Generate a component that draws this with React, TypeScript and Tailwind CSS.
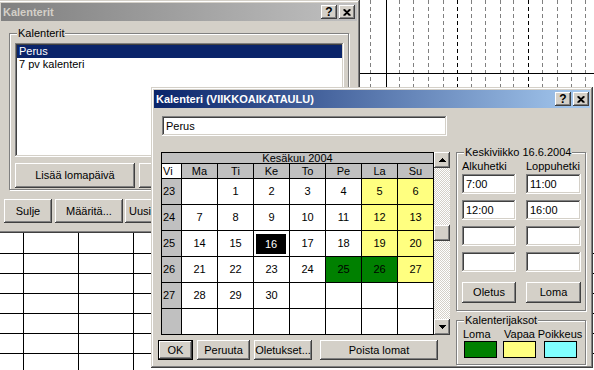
import type { ReactNode } from 'react'

const raised =
  'shadow-[inset_-1px_-1px_#404040,inset_1px_1px_#ffffff,inset_-2px_-2px_#808080,inset_2px_2px_#d4d0c8]'
const frame =
  'shadow-[inset_-1px_-1px_#404040,inset_1px_1px_#d4d0c8,inset_-2px_-2px_#808080,inset_2px_2px_#ffffff]'
const sunken =
  'shadow-[inset_-1px_-1px_#ffffff,inset_1px_1px_#808080,inset_-2px_-2px_#d4d0c8,inset_2px_2px_#404040]'
const checker =
  'bg-[image:repeating-conic-gradient(#d4d0c8_0_25%,#ffffff_0_50%)] bg-[length:2px_2px]'

const dayNames = ['Ma', 'Ti', 'Ke', 'To', 'Pe', 'La', 'Su']

const weeks: { no: number | null; days: (number | null)[] }[] = [
  { no: 23, days: [null, 1, 2, 3, 4, 5, 6] },
  { no: 24, days: [7, 8, 9, 10, 11, 12, 13] },
  { no: 25, days: [14, 15, 16, 17, 18, 19, 20] },
  { no: 26, days: [21, 22, 23, 24, 25, 26, 27] },
  { no: 27, days: [28, 29, 30, null, null, null, null] },
  { no: null, days: [null, null, null, null, null, null, null] },
]

const holidays = [25, 26]
const selectedDay = 16

function Button({
  children,
  className = '',
  isDefault = false,
}: {
  children?: ReactNode
  className?: string
  isDefault?: boolean
}) {
  if (isDefault) {
    return (
      <div className={`border border-black bg-[#d4d0c8] ${className}`}>
        <div className={`h-full flex items-center justify-center ${raised}`}>{children}</div>
      </div>
    )
  }
  return (
    <div className={`flex items-center justify-center bg-[#d4d0c8] ${raised} ${className}`}>
      {children}
    </div>
  )
}

function TitleButtons() {
  return (
    <div className="flex gap-[2px]">
      <div
        className={`w-[16px] h-[14px] flex items-center justify-center bg-[#d4d0c8] font-bold text-[12px] text-black leading-none ${raised}`}
      >
        ?
      </div>
      <div className={`w-[16px] h-[14px] flex items-center justify-center bg-[#d4d0c8] ${raised}`}>
        <svg width="9" height="7" viewBox="0 0 9 7">
          <path
            d="M0.5 0.5L6.5 6.5M1.5 0.5L7.5 6.5M7.5 0.5L1.5 6.5M6.5 0.5L0.5 6.5"
            stroke="black"
            strokeWidth="1.2"
          />
        </svg>
      </div>
    </div>
  )
}

function GroupBox({
  label,
  className = '',
  children,
}: {
  label: string
  className?: string
  children: ReactNode
}) {
  return (
    <div className={`relative border border-[#808080] shadow-[inset_1px_1px_#ffffff,1px_1px_#ffffff] ${className}`}>
      <span className="absolute left-[7px] top-[-7px] px-[1px] bg-[#d4d0c8] leading-[13px]">{label}</span>
      {children}
    </div>
  )
}

function Arrow({ down = false }: { down?: boolean }) {
  return (
    <div className={`h-[16px] flex items-center justify-center bg-[#d4d0c8] ${raised}`}>
      <svg width="7" height="4" viewBox="0 0 7 4" shapeRendering="crispEdges">
        <path d={down ? 'M0 0h7L3.5 4z' : 'M3.5 0L7 4H0z'} fill="black" />
      </svg>
    </div>
  )
}

function BackgroundChart() {
  const gray = [370, 399, 413, 428, 443, 471, 485, 500, 513, 542, 557, 571, 585]
  const dark = [457, 528]
  return (
    <svg className="absolute inset-0" width="594" height="370">
      {gray.map(x => (
        <line key={x} x1={x + 0.5} y1={0} x2={x + 0.5} y2={90} stroke="#808080" strokeDasharray="4 3" />
      ))}
      {dark.map(x => (
        <line key={x} x1={x + 0.5} y1={0} x2={x + 0.5} y2={90} stroke="#000" strokeDasharray="4 3" />
      ))}
      <line x1={386.5} y1={0} x2={386.5} y2={90} stroke="#000" />
      <line x1={360} y1={73.5} x2={594} y2={73.5} stroke="#000" />
      {[253, 273, 293, 313, 333, 353].map(y => (
        <line key={y} x1={0} y1={y + 0.5} x2={594} y2={y + 0.5} stroke="#000" />
      ))}
      {[23, 78, 133].map(x => (
        <line key={x} x1={x + 0.5} y1={230} x2={x + 0.5} y2={370} stroke="#000" />
      ))}
    </svg>
  )
}

function CalendarsWindow() {
  return (
    <div className={`absolute left-[-2px] top-0 w-[362px] h-[233px] p-[3px] bg-[#d4d0c8] ${frame}`}>
      <div className="h-[18px] flex items-center justify-between pl-[2px] pr-[2px] bg-[linear-gradient(to_right,#808080,#c0c0c0)]">
        <span className="font-bold text-[#d4d0c8]">Kalenterit</span>
        <TitleButtons />
      </div>
      <GroupBox label="Kalenterit" className="mt-[12px] mx-[8px] pt-[9px] pl-[5px] pr-[4px] pb-[1px]">
        <div className={`h-[114px] p-[2px] bg-white ${sunken}`}>
          <div className="h-[13px] pl-[2px] bg-[#0a246a] text-white">Perus</div>
          <div className="h-[13px] pl-[2px]">7 pv kalenteri</div>
        </div>
        <div className="mt-[6px] flex gap-[4px]">
          <Button className="w-[120px] h-[25px]">Lisää lomapäivä</Button>
          {/* covered by the dialog */}
          <Button className="w-[120px] h-[25px]" />
        </div>
      </GroupBox>
      <div className="mt-[9px] ml-[3px] flex">
        <Button className="w-[48px] h-[24px]">Sulje</Button>
        <Button className="ml-[3px] w-[68px] h-[24px]">Määritä...</Button>
        <Button className="ml-[2px] w-[30px] h-[24px]">Uusi</Button>
      </div>
    </div>
  )
}

function dayCellColor(day: number | null, col: number) {
  if (day && holidays.includes(day)) return 'bg-[#008000]'
  if (day && col >= 5) return 'bg-[#ffff80]'
  return 'bg-white'
}

function MonthGrid() {
  return (
    <div className="grid grid-cols-[19px_repeat(7,35px)] grid-rows-[10px_14px_repeat(6,25px)] gap-px bg-black border border-black">
      <div className="col-span-8 flex items-center justify-center bg-[#c0c0c0] leading-[10px]">Kesäkuu 2004</div>
      <div className="flex items-center pl-[1px] bg-white">Vi</div>
      {dayNames.map(n => (
        <div key={n} className="flex items-center justify-center bg-[#c0c0c0]">
          {n}
        </div>
      ))}
      {weeks.map((w, wi) => (
        <div key={wi} className="contents">
          <div className="flex items-center pl-[1px] bg-[#c0c0c0]">{w.no}</div>
          {w.days.map((d, di) =>
            d === selectedDay ? (
              <div key={di} className="flex bg-white">
                <div className="flex-1 ml-[2px] mr-[3px] mt-[3px] mb-[2px] flex items-center justify-center bg-black text-white">
                  {d}
                </div>
              </div>
            ) : (
              <div key={di} className={`flex items-center justify-center ${dayCellColor(d, di)}`}>
                {d}
              </div>
            ),
          )}
        </div>
      ))}
    </div>
  )
}

function CalendarDialog() {
  return (
    <div className={`absolute left-[151px] top-[87px] w-[442px] h-[281px] p-[3px] bg-[#d4d0c8] ${frame}`}>
      <div className="h-[18px] flex items-center justify-between pl-[2px] pr-[1px] bg-[linear-gradient(to_right,#0a246a,#a6caf0)]">
        <span className="font-bold text-white">Kalenteri (VIIKKOAIKATAULU)</span>
        <TitleButtons />
      </div>
      <div className="flex">
        <div className="w-[296px] pl-[4px]">
          <div className={`mt-[8px] ml-[4px] w-[285px] h-[20px] flex items-center pl-[4px] bg-white ${sunken}`}>
            Perus
          </div>
          <div className="mt-[16px] ml-[3px] flex">
            <MonthGrid />
            <div className="w-[16px] flex flex-col">
              <Arrow />
              <div className={`h-[57px] ${checker}`} />
              <div className={`h-[16px] bg-[#d4d0c8] ${raised}`} />
              <div className={`flex-1 ${checker}`} />
              <Arrow down />
            </div>
          </div>
          <div className="mt-[5px] flex">
            <Button isDefault className="w-[35px] h-[20px]">
              OK
            </Button>
            <Button className="ml-[4px] w-[53px] h-[20px]">Peruuta</Button>
            <Button className="ml-[4px] w-[58px] h-[20px]">Oletukset...</Button>
            <Button className="ml-[8px] w-[118px] h-[20px]">Poista lomat</Button>
          </div>
        </div>
        <div className="ml-[6px] w-[130px]">
          <GroupBox label="Keskiviikko 16.6.2004" className="mt-[44px] h-[159px] pt-[7px] pl-[5px]">
            <div className="grid grid-cols-[54px_55px] gap-x-[10px]">
              <div className="h-[13px]">Alkuhetki</div>
              <div className="h-[13px]">Loppuhetki</div>
            </div>
            <div className="mt-[1px] grid grid-cols-[54px_55px] gap-x-[10px] gap-y-[6px]">
              {['7:00', '11:00', '12:00', '16:00', '', '', '', ''].map((t, i) => (
                <div key={i} className={`h-[20px] flex items-center pl-[4px] bg-white ${sunken}`}>
                  {t}
                </div>
              ))}
              <Button className="mt-[4px] h-[21px]">Oletus</Button>
              <Button className="mt-[4px] h-[21px]">Loma</Button>
            </div>
          </GroupBox>
          <GroupBox label="Kalenterijaksot" className="mt-[9px] h-[45px] pt-[7px] pl-[6px]">
            <div className="flex">
              <div className="w-[35px] flex flex-col">
                <span className="h-[13px]">Loma</span>
                <div className="ml-[1px] w-[33px] h-[17px] border border-black bg-[#008000]" />
              </div>
              <div className="ml-[5px] w-[33px] flex flex-col items-center">
                <span className="h-[13px]">Vapaa</span>
                <div className="w-[33px] h-[17px] border border-black bg-[#ffff80]" />
              </div>
              <div className="ml-[2px] w-[44px] flex flex-col items-center">
                <span className="h-[13px]">Poikkeus</span>
                <div className="w-[33px] h-[17px] border border-black bg-[#80ffff]" />
              </div>
            </div>
          </GroupBox>
        </div>
      </div>
    </div>
  )
}

export default function App() {
  return (
    <div className="relative w-[594px] h-[370px] overflow-hidden bg-white text-[11px] leading-[13px] text-black [font-family:'Liberation_Sans',Arial,sans-serif]">
      <BackgroundChart />
      <CalendarsWindow />
      <CalendarDialog />
    </div>
  )
}
